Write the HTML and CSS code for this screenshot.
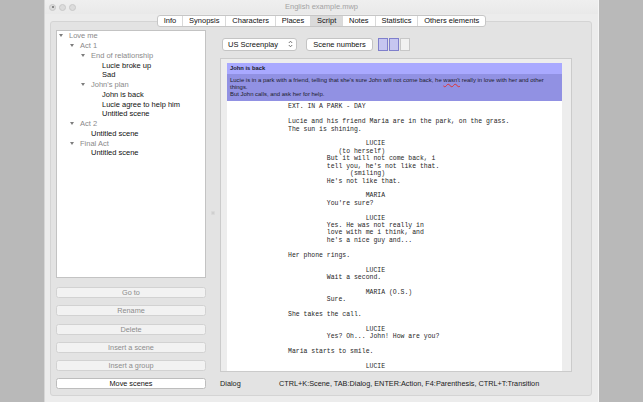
FILE: index.html
```html
<!DOCTYPE html>
<html lang="en">
<head>
<meta charset="utf-8">
<title>English example.mwp</title>
<link rel="stylesheet" href="styles.css">
</head>
<body>
<div class="screen">
  <div class="window">
    <div class="titlebar">
      <div class="lights">
        <span class="light dot"></span>
        <span class="light"></span>
        <span class="light"></span>
      </div>
      <div class="title">English example.mwp</div>
      <div></div>
    </div>

    <div class="tabs">
      <div class="seg">
        <span class="tab">Info</span>
        <span class="tab">Synopsis</span>
        <span class="tab">Characters</span>
        <span class="tab">Places</span>
        <span class="tab sel">Script</span>
        <span class="tab">Notes</span>
        <span class="tab">Statistics</span>
        <span class="tab">Others elements</span>
      </div>
    </div>

    <div class="panel">
      <div class="left">
        <div class="tree">
          <div class="row l0 group"><span class="tri"></span>Love me</div>
          <div class="row l1 group"><span class="tri"></span>Act 1</div>
          <div class="row l2 group"><span class="tri"></span>End of relationship</div>
          <div class="row l3"><span class="slot"></span>Lucie broke up</div>
          <div class="row l3"><span class="slot"></span>Sad</div>
          <div class="row l2 group"><span class="tri"></span>John's plan</div>
          <div class="row l3"><span class="slot"></span>John is back</div>
          <div class="row l3"><span class="slot"></span>Lucie agree to help him</div>
          <div class="row l3"><span class="slot"></span>Untitled scene</div>
          <div class="row l1 group"><span class="tri"></span>Act 2</div>
          <div class="row l2"><span class="slot"></span>Untitled scene</div>
          <div class="row l1 group"><span class="tri"></span>Final Act</div>
          <div class="row l2"><span class="slot"></span>Untitled scene</div>
        </div>
        <div class="buttons">
          <div class="btn-l">Go to</div>
          <div class="btn-l">Rename</div>
          <div class="btn-l">Delete</div>
          <div class="btn-l">Insert a scene</div>
          <div class="btn-l">Insert a group</div>
          <div class="btn-l active">Move scenes</div>
        </div>
      </div>

      <div class="splitter"><span class="grip"></span></div>

      <div class="right">
        <div class="toolbar">
          <div class="select">
            <span>US Screenplay</span>
            <svg class="updown" width="5" height="8" viewBox="0 0 5 8"><path d="M0.8 3 L2.5 1.2 L4.2 3 M0.8 5 L2.5 6.8 L4.2 5" fill="none" stroke="#555" stroke-width="0.8"/></svg>
          </div>
          <div class="btn">Scene numbers</div>
          <div class="toggles">
            <span class="tg on"></span>
            <span class="tg on"></span>
            <span class="tg"></span>
          </div>
        </div>

        <div class="scriptbox">
          <div class="scene-head">John is back</div>
          <div class="scene-desc">Lucie is in a park with a friend, telling that she's sure John will not come back, he <span class="typo">wasn't</span> really in love with her and other<br>things.<br>But John calls, and ask her for help.</div>
          <div class="page">
            <div class="ln">EXT. IN A PARK - DAY</div>
            <div class="ln"> </div>
            <div class="ln">Lucie and his friend Maria are in the park, on the grass.</div>
            <div class="ln">The sun is shining.</div>
            <div class="ln"> </div>
            <div class="ln chr">LUCIE</div>
            <div class="ln par">(to herself)</div>
            <div class="ln dlg">But it will not come back, i</div>
            <div class="ln dlg">tell you, he's not like that.</div>
            <div class="ln par2">(smiling)</div>
            <div class="ln dlg">He's not like that.</div>
            <div class="ln"> </div>
            <div class="ln chr">MARIA</div>
            <div class="ln dlg">You're sure?</div>
            <div class="ln"> </div>
            <div class="ln chr">LUCIE</div>
            <div class="ln dlg">Yes. He was not really in</div>
            <div class="ln dlg">love with me i think, and</div>
            <div class="ln dlg">he's a nice guy and...</div>
            <div class="ln"> </div>
            <div class="ln">Her phone rings.</div>
            <div class="ln"> </div>
            <div class="ln chr">LUCIE</div>
            <div class="ln dlg">Wait a second.</div>
            <div class="ln"> </div>
            <div class="ln chr">MARIA (O.S.)</div>
            <div class="ln dlg">Sure.</div>
            <div class="ln"> </div>
            <div class="ln">She takes the call.</div>
            <div class="ln"> </div>
            <div class="ln chr">LUCIE</div>
            <div class="ln dlg">Yes? Oh... John! How are you?</div>
            <div class="ln"> </div>
            <div class="ln">Maria starts to smile.</div>
            <div class="ln"> </div>
            <div class="ln chr">LUCIE</div>
          </div>
        </div>

        <div class="status">
          <span class="mode">Dialog</span>
          <span class="keys">CTRL+K:Scene, TAB:Dialog, ENTER:Action, F4:Parenthesis, CTRL+T:Transition</span>
        </div>
      </div>
    </div>
  </div>
</div>
</body>
</html>
```

FILE: styles.css
```css
* { box-sizing: border-box; }

html, body {
  margin: 0;
  padding: 0;
  background: #b9b9b9;
  font-family: "Liberation Sans", Arial, sans-serif;
}

.screen {
  width: 643px;
  height: 402px;
  display: flex;
  overflow: hidden;
}

.window {
  margin-left: 44px;
  width: 555px;
  height: 402px;
  background: #ececec;
  border-left: 1px solid #d6d6d6;
  border-right: 1px solid #f6f6f6;
  display: flex;
  flex-direction: column;
}

/* title bar */
.titlebar {
  height: 14px;
  display: grid;
  grid-template-columns: 1fr auto 1fr;
  align-items: center;
  background: linear-gradient(#efefef, #e9e9e9);
}
.lights {
  display: flex;
  gap: 3px;
  padding-left: 4px;
}
.light {
  width: 7px;
  height: 7px;
  border-radius: 50%;
  background: #dcdcdc;
  border: 1px solid #c9c9c9;
  display: flex;
  align-items: center;
  justify-content: center;
}
.light.dot::after {
  content: "";
  width: 2px;
  height: 2px;
  border-radius: 50%;
  background: #6d6d6d;
}
.title {
  font-size: 7.5px;
  color: #a3a3a3;
  line-height: 10px;
}

/* tabs */
.tabs {
  display: flex;
  justify-content: center;
  margin-top: 1px;
  position: relative;
  z-index: 1;
}
.seg {
  display: flex;
  height: 12px;
  background: #fff;
  border: 1px solid #c6c6c6;
  border-radius: 3px;
  overflow: hidden;
}
.tab {
  font-size: 7.5px;
  line-height: 10px;
  padding: 0 5.9px;
  color: #111;
  border-left: 1px solid #d9d9d9;
}
.tab:first-child { border-left: none; }
.tab.sel { background: #dadada; }

/* main panel */
.panel {
  margin: -6px 6px 0 5px;
  height: 375px;
  background: #e3e3e3;
  border: 1px solid #d4d4d4;
  border-radius: 3px;
  padding: 8px 19px 0 5px;
  display: grid;
  grid-template-columns: 150px 14px 352px;
}

.left {
  display: flex;
  flex-direction: column;
}
.tree {
  height: 248px;
  background: #fff;
  border: 1px solid #c3c3c3;
  padding-top: 0;
}
.row {
  display: flex;
  align-items: center;
  height: 9.75px;
  font-size: 7.5px;
  color: #111;
  white-space: nowrap;
}
.row.group { color: #8a8a8a; }
.l0 { padding-left: 2px; }
.l1 { padding-left: 13px; }
.l2 { padding-left: 24px; }
.l3 { padding-left: 35px; }
.tri, .slot {
  width: 10px;
  flex: none;
  display: flex;
  align-items: center;
}
.tri::before {
  content: "";
  border-left: 2.2px solid transparent;
  border-right: 2.2px solid transparent;
  border-top: 3.5px solid #7d7d7d;
}

.buttons {
  margin-top: 9px;
  display: flex;
  flex-direction: column;
  gap: 7.3px;
}
.btn-l {
  height: 11px;
  background: #f2f2f2;
  border: 1px solid #d2d2d2;
  border-radius: 2.5px;
  font-size: 7.3px;
  line-height: 9px;
  text-align: center;
  color: #8c8c8c;
}
.btn-l.active {
  background: #fff;
  border-color: #bdbdbd;
  color: #111;
}

.splitter {
  display: flex;
  align-items: center;
  justify-content: center;
}
.grip {
  width: 4px;
  height: 4px;
  border-radius: 1px;
  background: #cfcfcf;
  border: 1px solid #d9d9d9;
}

/* right column */
.right {
  display: flex;
  flex-direction: column;
}
.toolbar {
  margin-top: 7px;
  height: 14px;
  display: flex;
  align-items: center;
  padding-left: 2px;
}
.select {
  width: 75px;
  height: 13px;
  background: #fff;
  border: 1px solid #c4c4c4;
  border-radius: 3px;
  display: flex;
  align-items: center;
  justify-content: space-between;
  padding: 0 3px 0 5px;
  font-size: 7.5px;
  color: #111;
}
.updown { display: block; }
.btn {
  margin-left: 9px;
  width: 67px;
  height: 13px;
  background: #fff;
  border: 1px solid #c4c4c4;
  border-radius: 3px;
  font-size: 7.5px;
  line-height: 11px;
  text-align: center;
  color: #111;
}
.toggles {
  margin-left: 5px;
  display: flex;
  gap: 1.5px;
  align-self: flex-end;
  height: 13px;
}
.tg {
  width: 9.5px;
  height: 13px;
  background: #f1f1f1;
  border: 1px solid #c7c7c7;
}
.tg.on {
  background: #c6c6f0;
  border-color: #7f7fcc;
}

.scriptbox {
  margin-top: 7px;
  height: 314px;
  background: #ededed;
  border: 1px solid #cbcbcb;
  padding: 4px 9px 0 6px;
  display: flex;
  flex-direction: column;
  overflow: hidden;
}
.scene-head {
  height: 11px;
  background: #a9a9ff;
  font-size: 5.8px;
  font-weight: bold;
  line-height: 11px;
  padding-left: 3px;
  color: #1a1a2a;
}
.scene-desc {
  background: #9191e3;
  padding: 3px 3px;
  font-size: 5.95px;
  line-height: 7px;
  color: #1c1c2c;
  white-space: nowrap;
  overflow: hidden;
}
.typo {
  text-decoration: underline wavy #d33;
  text-decoration-thickness: 0.6px;
}
.page {
  flex: 1;
  background: #fff;
  padding: 2.3px 0 0 61px;
  font-family: "Liberation Mono", "Courier New", monospace;
  font-size: 6.47px;
  color: #262626;
  overflow: hidden;
}
.ln {
  height: 7.43px;
  line-height: 7.43px;
  white-space: pre;
}
.dlg { padding-left: 10ch; }
.par { padding-left: 13ch; }
.par2 { padding-left: 16ch; }
.chr { padding-left: 20ch; }

.status {
  flex: 1;
  display: flex;
  align-items: center;
  font-size: 7.3px;
  color: #1a1a1a;
  padding-bottom: 1px;
}
.mode { width: 59px; }
```
